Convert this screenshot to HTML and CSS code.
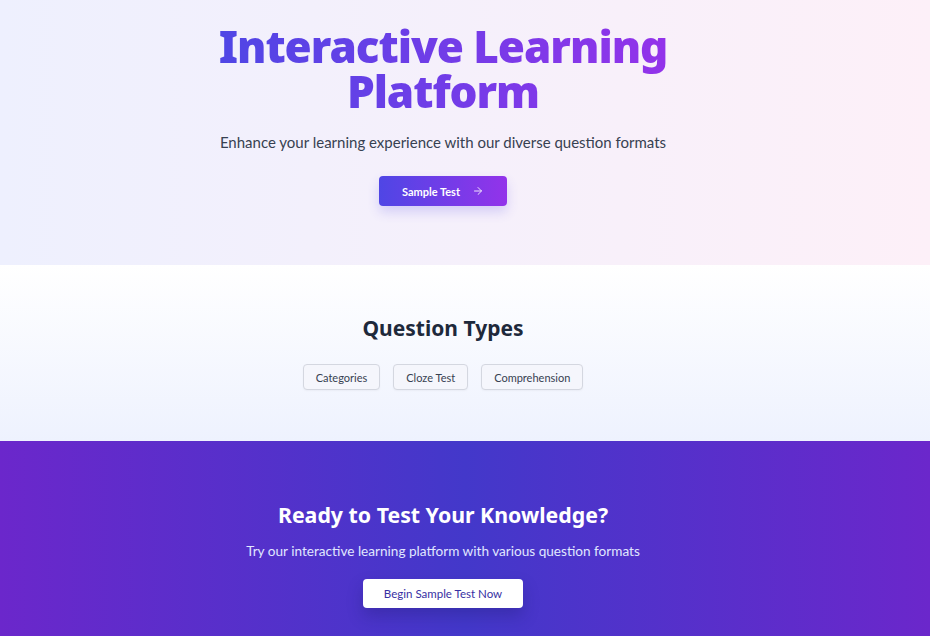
FILE: index.html
```html
<!DOCTYPE html>
<html lang="en">
<head>
<meta charset="utf-8">
<title>Interactive Learning Platform</title>
<link rel="stylesheet" href="styles.css">
</head>
<body>
<section class="hero">
  <h1 class="hero-title">Interactive Learning<br>Platform</h1>
  <p class="hero-sub">Enhance your learning experience with our diverse question formats</p>
  <a class="btn-primary" href="#">Sample Test
    <svg class="arrow" viewBox="0 0 24 24" width="12" height="12" fill="none" stroke="currentColor" stroke-width="2" stroke-linecap="round" stroke-linejoin="round"><path d="M5 12h14"/><path d="M12 5l7 7-7 7"/></svg>
  </a>
</section>
<section class="types">
  <h2 class="types-title">Question Types</h2>
  <div class="pills">
    <span class="pill">Categories</span>
    <span class="pill">Cloze Test</span>
    <span class="pill">Comprehension</span>
  </div>
</section>
<section class="cta">
  <h2 class="cta-title">Ready to Test Your Knowledge?</h2>
  <p class="cta-sub">Try our interactive learning platform with various question formats</p>
  <a class="btn-white" href="#">Begin Sample Test Now</a>
</section>
</body>
</html>
```
FILE: styles.css
```css
* { box-sizing: border-box; }
html, body { margin: 0; padding: 0; }
body {
  font-family: "Lato", "Noto Sans", sans-serif;
  color: #1f2937;
  overflow: hidden;
}
.hero {
  height: 265px;
  background: linear-gradient(to right, #eef0fe, #fdf0f8);
  display: flex;
  flex-direction: column;
  align-items: center;
  padding: 24px 44px 0 0;
}
.hero-title {
  margin: 0;
  font-family: "Noto Sans", sans-serif;
  font-size: 44px;
  line-height: 45px;
  font-weight: 900;
  letter-spacing: -1.05px;
  text-align: center;
  background: linear-gradient(to right, #4f46e5, #9333ea);
  -webkit-background-clip: text;
  background-clip: text;
  color: transparent;
}
.hero-sub {
  margin: 18px 0 0;
  font-size: 15px;
  line-height: 20px;
  color: #374151;
}
.btn-primary {
  margin-top: 24px;
  width: 128px;
  height: 30px;
  display: flex;
  align-items: center;
  justify-content: center;
  gap: 12px;
  border-radius: 4px;
  background: linear-gradient(to right, #4f46e5, #9333ea);
  color: #fff;
  font-size: 11px;
  font-weight: 700;
  text-decoration: none;
  box-shadow: 0 6px 12px rgba(79, 70, 229, 0.2);
}
.arrow { opacity: 0.85; }
.types {
  height: 176px;
  background: linear-gradient(to bottom, #ffffff, #eef2fe);
  display: flex;
  flex-direction: column;
  align-items: center;
  padding: 49px 44px 0 0;
}
.types-title {
  margin: 0;
  font-family: "Noto Sans", sans-serif;
  font-size: 21px;
  line-height: 28px;
  font-weight: 700;
  color: #1e293b;
}
.pills {
  margin-top: 22px;
  display: flex;
  gap: 13px;
}
.pill {
  height: 26px;
  padding: 0 12px;
  display: flex;
  align-items: center;
  border: 1px solid #d4d7e0;
  border-radius: 4px;
  background: #f5f6fc;
  font-size: 11px;
  color: #374151;
  box-shadow: 0 1px 2px rgba(0,0,0,0.04);
}
.pill-wide { padding: 0 11px; }
.cta {
  height: 200px;
  background: linear-gradient(to right, #6b27cb, #4338ca 50%, #6b27cb);
  display: flex;
  flex-direction: column;
  align-items: center;
  padding: 60px 44px 0 0;
  color: #fff;
}
.cta-title {
  margin: 0;
  font-family: "Noto Sans", sans-serif;
  font-size: 21.3px;
  line-height: 28px;
  font-weight: 700;
}
.cta-sub {
  margin: 14px 0 0;
  font-size: 13.6px;
  color: #e0e7ff;
}
.btn-white {
  margin-top: 20px;
  width: 160px;
  height: 29px;
  display: flex;
  align-items: center;
  justify-content: center;
  border-radius: 4px;
  background: #fff;
  color: #3730a3;
  font-size: 11.5px;
  text-decoration: none;
  box-shadow: 0 8px 16px rgba(30, 27, 110, 0.3);
}
```
